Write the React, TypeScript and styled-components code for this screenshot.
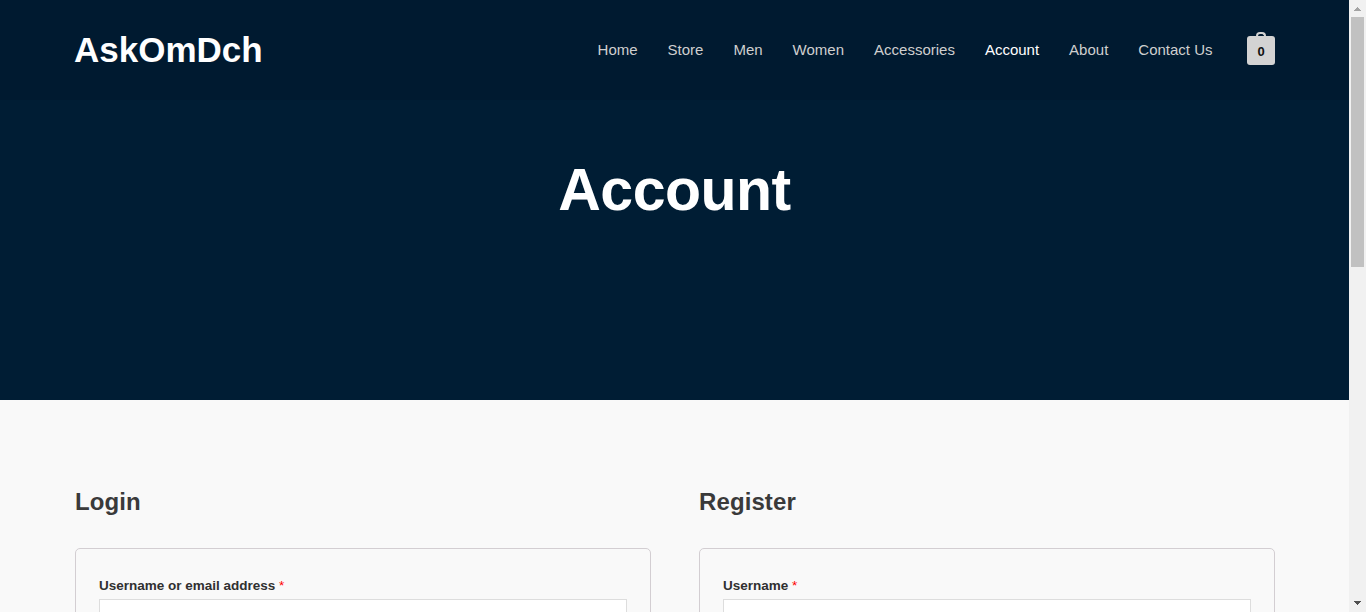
import React from "react";
import styled, { createGlobalStyle } from "styled-components";

const GlobalStyle = createGlobalStyle`
  *, *::before, *::after { box-sizing: border-box; }
  html, body { margin: 0; height: 612px; overflow: hidden; }
  body { font-family: "Liberation Sans", Arial, sans-serif; font-size: 15px; color: #3a3a3a; background: #f9f9f9; }
`;

const Window = styled.div`
  display: flex;
  width: 1366px;
  height: 612px;
  overflow: hidden;
`;

const Page = styled.div`
  width: 1349px;
  height: 612px;
  overflow: hidden;
  background: #f9f9f9;
`;

const Header = styled.header`
  display: flex;
  align-items: center;
  justify-content: space-between;
  height: 100px;
  padding: 0 74px;
  background: #001a30;
`;

const Logo = styled.a`
  color: #fff;
  font-size: 35px;
  font-weight: 700;
  line-height: 42px;
`;

const Nav = styled.nav`
  display: flex;
  align-items: center;
`;

const NavLink = styled.a<{ $active?: boolean }>`
  padding: 0 15px;
  line-height: 20px;
  color: ${(p) => (p.$active ? "#fff" : "#cfcfcf")};
`;

const Cart = styled.a`
  display: flex;
  flex-direction: column;
  align-items: center;
  width: 28px;
  margin: 0 0 2px 19.5px;
  padding-top: 3px;
`;

const CartHandle = styled.span`
  width: 10px;
  height: 4px;
  margin-top: -4px;
  border: 2px solid #d3d3d3;
  border-bottom: 0;
  border-radius: 10px 10px 0 0;
`;

const CartCount = styled.span`
  width: 28px;
  height: 29px;
  border-radius: 3px;
  background: #d3d3d3;
  color: #111;
  font-size: 13px;
  font-weight: 700;
  line-height: 31px;
  text-align: center;
`;

const Hero = styled.section`
  height: 300px;
  padding-top: 55px;
  background: #001d34;
  text-align: center;
`;

const HeroTitle = styled.h1`
  margin: 0;
  color: #fff;
  font-size: 59px;
  font-weight: 700;
  letter-spacing: -0.5px;
  line-height: 70px;
`;

const Forms = styled.main`
  display: grid;
  grid-template-columns: 576px 576px;
  gap: 48px;
  padding: 87px 75px 0;
`;

const FormTitle = styled.h2`
  margin: 0 0 31px;
  font-size: 24px;
  font-weight: 700;
  letter-spacing: 0.1px;
  line-height: 30px;
`;

const Form = styled.form`
  height: 300px;
  padding: 23px;
  border: 1px solid #d3ced2;
  border-radius: 5px;
`;

const Label = styled.label`
  display: block;
  height: 27px;
  padding-top: 4px;
  color: #303030;
  font-size: 13.5px;
  font-weight: 700;
  line-height: 20px;
`;

const Required = styled.span`
  color: red;
  font-weight: 400;
`;

const Input = styled.input`
  display: block;
  width: 100%;
  height: 40px;
  border: 1px solid #ddd;
  border-radius: 0;
  background: #fff;
`;

const Scrollbar = styled.div`
  display: flex;
  flex-direction: column;
  align-items: center;
  width: 17px;
  height: 612px;
  background: #f1f1f1;
`;

const Arrow = styled.svg`
  display: block;
  width: 17px;
  height: 17px;
`;

const Thumb = styled.div`
  width: 13px;
  height: 250px;
  margin-bottom: auto;
  background: #c1c1c1;
`;

const links = ["Home", "Store", "Men", "Women", "Accessories", "Account", "About", "Contact Us"];

const AccountForm = ({ title, label }: { title: string; label: string }) => (
  <section>
    <FormTitle>{title}</FormTitle>
    <Form>
      <Label>
        {label} <Required>*</Required>
      </Label>
      <Input aria-label={label} />
    </Form>
  </section>
);

export default function App() {
  return (
    <>
      <GlobalStyle />
      <Window>
        <Page>
          <Header>
            <Logo>AskOmDch</Logo>
            <Nav>
              {links.map((name) => (
                <NavLink key={name} $active={name === "Account"}>
                  {name}
                </NavLink>
              ))}
              <Cart>
                <CartHandle />
                <CartCount>0</CartCount>
              </Cart>
            </Nav>
          </Header>
          <Hero>
            <HeroTitle>Account</HeroTitle>
          </Hero>
          <Forms>
            <AccountForm title="Login" label="Username or email address" />
            <AccountForm title="Register" label="Username" />
          </Forms>
        </Page>
        <Scrollbar>
          <Arrow viewBox="0 0 17 17" shapeRendering="crispEdges">
            <path d="M5 11h7v-1h-1v-1h-1v-1h-1v-1h-1v1h-1v1h-1v1h-1z" fill="#a3a3a3" />
          </Arrow>
          <Thumb />
          <Arrow viewBox="0 0 17 17" shapeRendering="crispEdges">
            <path d="M5 6h7v1h-1v1h-1v1h-1v1h-1v-1h-1v-1h-1v-1h-1z" fill="#505050" />
          </Arrow>
        </Scrollbar>
      </Window>
    </>
  );
}
